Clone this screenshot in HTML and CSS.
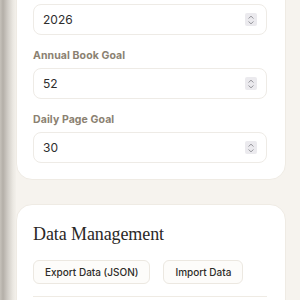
FILE: index.html
```html
<!DOCTYPE html>
<html>
<head>
<meta charset="utf-8">
<link rel="stylesheet" href="styles.css">
</head>
<body>
<div class="layout">
  <div class="edge"></div>
  <main class="main">
    <section class="card card-settings">
      <div class="field">
        <div class="input"><span class="value">2026</span><span class="spin"><svg width="8" height="10" viewBox="0 0 8 10"><path d="M1.5 3.5L4 1.2L6.5 3.5M1.5 6.5L4 8.8L6.5 6.5" fill="none" stroke="#8d8d93" stroke-width="0.9"/></svg></span></div>
      </div>
      <div class="field">
        <label class="label">Annual Book Goal</label>
        <div class="input"><span class="value">52</span><span class="spin"><svg width="8" height="10" viewBox="0 0 8 10"><path d="M1.5 3.5L4 1.2L6.5 3.5M1.5 6.5L4 8.8L6.5 6.5" fill="none" stroke="#8d8d93" stroke-width="0.9"/></svg></span></div>
      </div>
      <div class="field">
        <label class="label">Daily Page Goal</label>
        <div class="input"><span class="value">30</span><span class="spin"><svg width="8" height="10" viewBox="0 0 8 10"><path d="M1.5 3.5L4 1.2L6.5 3.5M1.5 6.5L4 8.8L6.5 6.5" fill="none" stroke="#8d8d93" stroke-width="0.9"/></svg></span></div>
      </div>
    </section>
    <section class="card card-data">
      <h2 class="heading">Data Management</h2>
      <div class="actions">
        <button class="btn">Export Data (JSON)</button>
        <button class="btn">Import Data</button>
      </div>
      <div class="divider"></div>
    </section>
  </main>
</div>
</body>
</html>
```
FILE: styles.css
```css
html, body {
  margin: 0;
  padding: 0;
  background: #f6f3ee;
  height: 300px;
  overflow: hidden;
  font-family: Inter, "Liberation Sans", sans-serif;
}
.layout {
  display: flex;
  align-items: flex-start;
}
.edge {
  width: 16px;
  flex: none;
  align-self: stretch;
  min-height: 300px;
  background: linear-gradient(to right, #c6c2bb 0, #b4afa8 3px, #d2cec8 8px, #ebe8e2 13px, #f3f0eb 16px);
}
.main {
  flex: 1;
  padding-right: 14px;
  margin-top: -30px;
  display: flex;
  flex-direction: column;
  gap: 24px;
}
.card {
  background: #ffffff;
  border-radius: 16px;
  border: 1px solid #efebe4;
  padding: 16px 18px 16px 16px;
}
.card-settings {
  padding-top: 33px;
  display: flex;
  flex-direction: column;
  gap: 14px;
}
.field {
  display: flex;
  flex-direction: column;
  gap: 5px;
}
.label {
  font-size: 10.5px;
  line-height: 14px;
  font-weight: 700;
  color: #8b8171;
  letter-spacing: 0.1px;
}
.input {
  height: 29px;
  border: 1px solid #eeebe6;
  border-radius: 8px;
  display: flex;
  align-items: center;
  justify-content: space-between;
  padding: 0 9px 0 9px;
  background: #fff;
}
.value {
  font-size: 12px;
  color: #2e2e2e;
}
.spin {
  width: 12px;
  height: 13px;
  background: #ebeaee;
  border-radius: 2px;
  display: flex;
  align-items: center;
  justify-content: center;
}
.card-data {
  padding-top: 16px;
}
.heading {
  margin: 0;
  font-family: "Liberation Serif", "DejaVu Serif", serif;
  font-weight: 400;
  font-size: 18px;
  line-height: 26px;
  letter-spacing: -0.1px;
  color: #2a2826;
}
.actions {
  margin-top: 13px;
  display: flex;
  gap: 13px;
}
.btn {
  font-family: Inter, "Liberation Sans", sans-serif;
  font-size: 10px;
  font-weight: 500;
  color: #2e2c29;
  background: #fdfcfa;
  border: 1px solid #ece8e1;
  border-radius: 6px;
  height: 24px;
  padding: 0 11px;
}
.divider {
  margin-top: 12px;
  border-top: 1px solid #efebe4;
  height: 20px;
}
```
